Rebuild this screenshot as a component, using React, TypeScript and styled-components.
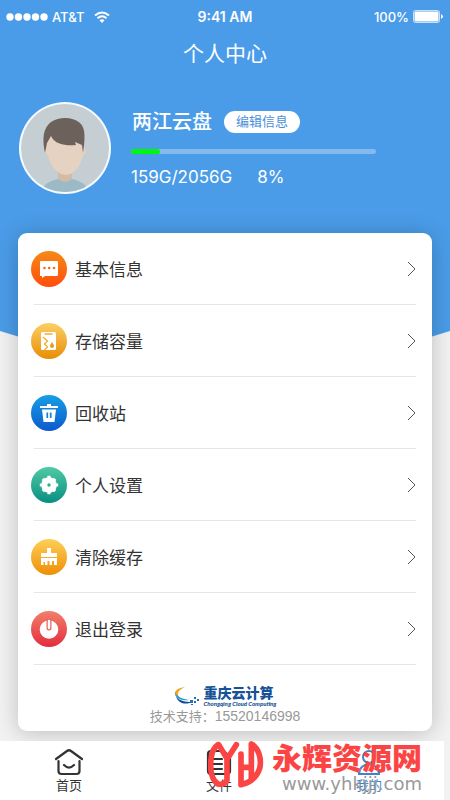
import React from 'react';
import styled, { createGlobalStyle } from 'styled-components';

const GlobalStyle = createGlobalStyle`
  *, *::before { box-sizing: border-box; }
  body {
    margin: 0;
    background: #f2f2f2;
    color: #333;
    font-family: "Liberation Sans", "Noto Sans CJK SC", sans-serif;
  }
  button { border: 0; padding: 0; background: none; font-family: inherit; color: inherit; cursor: pointer; }
`;

const Screen = styled.div`
  position: relative;
  isolation: isolate;
  display: flex;
  flex-direction: column;
  min-height: 100vh;
  overflow: hidden;

  &::before {
    content: '';
    position: absolute;
    z-index: -1;
    inset: 0 0 auto;
    height: 400px;
    background: #4a9ce8;
    clip-path: polygon(0 0, 100% 0, 100% 331px, 50% 400px, 0 331px);
  }
`;

const StatusBar = styled.div`
  display: grid;
  grid-template-columns: 1fr auto 1fr;
  align-items: center;
  height: 33px;
  padding: 0 6px;
  color: #fff;
  font: 500 13px Inter, sans-serif;
`;

const StatusGroup = styled.div<{ $end?: boolean }>`
  display: flex;
  align-items: center;
  gap: 4px;
  justify-content: ${p => (p.$end ? 'flex-end' : 'flex-start')};
`;

const Carrier = styled.span`margin-right: 6px;`;
const Clock = styled.span`
  font-size: 14px;
  font-weight: 600;
`;

const Title = styled.h1`
  margin: 0;
  color: #fff;
  font-size: 21px;
  font-weight: 400;
  line-height: 42px;
  text-align: center;
`;

const Profile = styled.section`
  display: flex;
  align-items: flex-start;
  gap: 20px;
  padding: 27px 74px 0 19px;
  color: #fff;
`;

const Avatar = styled.svg`
  flex: none;
  width: 92px;
  height: 92px;
`;

const ProfileInfo = styled.div`
  flex: 1;
  padding-top: 4px;
`;

const NameRow = styled.div`
  display: flex;
  align-items: center;
  gap: 12px;
  height: 31px;
`;

const Name = styled.h2`
  margin: 0;
  font-size: 20px;
  font-weight: 500;
  line-height: 30px;
  padding-left: 1px;
`;

const EditButton = styled.button`
  height: 22px;
  padding: 0 12px;
  border-radius: 11px;
  background: #fff;
  color: #4a90d9;
  font-size: 13px;
  line-height: 22px;
`;

const Track = styled.div`
  height: 5px;
  margin-top: 12px;
  border-radius: 3px;
  background: #84baee;
`;

const Fill = styled.div`
  height: 100%;
  border-radius: 3px;
  background: #00f513;
`;

const Usage = styled.div`
  display: flex;
  gap: 25px;
  margin-top: 12px;
  font: 17px/22px Inter, sans-serif;
`;

const Card = styled.main`
  margin: 39px 18px 0;
  padding: 0 16px 5px;
  border-radius: 9px;
  background: #fff;
  box-shadow: 0 2px 22px rgba(0, 0, 0, 0.22);
`;

const Menu = styled.ul`
  margin: 0;
  padding: 0;
  list-style: none;
`;

const MenuItem = styled.li`border-bottom: 1px solid #e5e5e5;`;

const MenuButton = styled.button`
  display: flex;
  align-items: center;
  width: 100%;
  height: 71px;
  font-size: 17px;
  text-align: left;
`;

const Badge = styled.span<{ $from: string; $to: string }>`
  display: grid;
  place-items: center;
  width: 36px;
  height: 36px;
  margin: 0 8px 0 -3px;
  border-radius: 50%;
  background: linear-gradient(${p => p.$from}, ${p => p.$to});
`;

const MenuLabel = styled.span`flex: 1;`;

const Support = styled.footer`
  display: flex;
  flex-direction: column;
  align-items: center;
  padding-top: 20px;
`;

const Brand = styled.div`
  display: flex;
  align-items: center;
  gap: 3px;
  height: 22px;
`;

const BrandText = styled.div`
  display: flex;
  flex-direction: column;
  color: #155298;
`;

const BrandName = styled.strong`
  font-size: 14px;
  font-weight: 900;
  line-height: 14px;
`;

const BrandLatin = styled.em`
  font: italic 900 6px/7px Lato, sans-serif;
`;

const Phone = styled.p`
  margin: 0;
  color: #999;
  font-size: 14px;
  line-height: 18px;
`;

const PhoneLabel = styled.span`font-size: 13px;`;

const NavArea = styled.div`
  position: relative;
  margin-top: auto;
`;

const TabBar = styled.nav`
  display: flex;
  justify-content: space-between;
  height: 59px;
  padding: 6px 50px 0 44px;
  margin-right: 6px;
  background: #fff;
`;

const Tab = styled.a<{ $active?: boolean }>`
  display: flex;
  flex-direction: column;
  align-items: center;
  width: 50px;
  color: ${p => (p.$active ? '#3f83cc' : '#333')};
  font-size: 13px;
  line-height: 18px;
  text-decoration: none;
`;

const SiteMark = styled.div`
  position: absolute;
  right: 28px;
  top: -1px;
  display: flex;
  gap: 8px;
  pointer-events: none;
`;

const SiteText = styled.div`
  display: flex;
  flex-direction: column;
  align-items: flex-end;
`;

const SiteName = styled.strong`
  color: #fb4545;
  font-size: 30px;
  font-weight: 900;
  line-height: 38px;
`;

const SiteUrl = styled.span`
  color: #999;
  font: 18px/12px "DejaVu Sans", sans-serif;
`;

const ICONS = {
  chat: (
    <>
      <path d="M2 2h16a1 1 0 0 1 1 1v13a1 1 0 0 1-1 1H6l-3 2v-2H1V3a1 1 0 0 1 1-1z" fill="#fff" />
      <g fill="#fb6b13"><circle cx="5.500" cy="9" r="1.300" /><circle cx="10.200" cy="9" r="1.300" /><circle cx="15" cy="9" r="1.300" /></g>
    </>
  ),
  storage: (
    <>
      <rect x="2" y="1" width="15" height="18" rx="1.500" fill="#fff" />
      <path d="M5.500 3h8M4 6l4.500 4L5.500 13l3 3-3 3" fill="none" stroke="#f2ac35" strokeWidth="1.300" />
      <path d="M13 11c-1 2-2 2.700-2 4a2 2 0 0 0 4 0c0-1.300-1-2-2-4z" fill="#ed9a18" />
    </>
  ),
  trash: (
    <>
      <path d="M1 3h18v2H1zM8 1h4v2H8zM3 6.500h14L15.500 19h-11z" fill="#fff" />
      <path d="M8.300 9.500V15M11.700 9.500V15" stroke="#1280db" strokeWidth="1.700" />
    </>
  ),
  gear: (
    <>
      <circle cx="10" cy="10" r="7.800" fill="#fff" />
      <path d="M10 .800v18.400M.800 10h18.400M3.800 3.800l12.400 12.400M16.200 3.800L3.800 16.200" stroke="#fff" strokeWidth="3.200" strokeLinejoin="round" />
      <circle cx="10" cy="10" r="1.700" fill="#2bae96" />
    </>
  ),
  brush: (
    <path d="M8 1h4v5h6v4H2V6h6zM2 11h16v7h-3v-4h-2v4h-2.500v-4h-2v4H6v-3H4.500v3H2z" fill="#fff" />
  ),
  power: (
    <>
      <circle cx="10" cy="10.500" r="9.300" fill="#fff" />
      <path d="M10 1v8" stroke="#ed6059" strokeWidth="5" strokeLinecap="round" />
      <path d="M10 2v7" stroke="#fff" strokeWidth="2.500" strokeLinecap="round" />
    </>
  ),
};

const ITEMS: { label: string; icon: keyof typeof ICONS; from: string; to: string }[] = [
  { label: '基本信息', icon: 'chat', from: '#f68a16', to: '#ff4d0c' },
  { label: '存储容量', icon: 'storage', from: '#fbd067', to: '#e88d04' },
  { label: '回收站', icon: 'trash', from: '#169fe5', to: '#0d59cd' },
  { label: '个人设置', icon: 'gear', from: '#50c9a4', to: '#088f82' },
  { label: '清除缓存', icon: 'brush', from: '#fdcf58', to: '#ef8e05' },
  { label: '退出登录', icon: 'power', from: '#f2806b', to: '#e32c3e' },
];

function UserAvatar() {
  return (
    <Avatar viewBox="0 0 92 92" role="img" aria-label="头像">
      <defs><clipPath id="face"><circle cx="46" cy="46" r="44" /></clipPath></defs>
      <circle cx="46" cy="46" r="46" fill="#f4faff" />
      <g clipPath="url(#face)">
        <rect width="92" height="92" fill="#c5ced3" />
        <path d="M22 92c1-9 8-13 17-15h14c9 2 16 6 17 15z" fill="#9bbac6" />
        <path d="M39 66h14v11q-7 6-14 0z" fill="#d3bba8" />
        <path d="M28 34h37v12c3 2 2 6-1 7-2 11-9 20-17 20S31 64 29 53c-4-1-4-5-3-7z" fill="#e6d2c1" />
        <path d="M26 51c-3-14-2-25 6-31 9-6 22-5 29 1 6 5 5 17 3 30l-1-8-7-3 1 3c-9 1-21 0-25-9l-4 7z" fill="#6d625b" />
      </g>
    </Avatar>
  );
}

export default function App() {
  return (
    <>
      <GlobalStyle />
      <Screen>
        <StatusBar>
          <StatusGroup>
            <svg width="42" height="8" viewBox="0 0 42 8" fill="#fff">
              {[4, 12.5, 21, 29.5, 38].map(x => <circle key={x} cx={x} cy="4" r="3.700" />)}
            </svg>
            <Carrier>AT&amp;T</Carrier>
            <svg width="16" height="12" viewBox="0 0 16 12" fill="none" stroke="#fff" strokeWidth="2">
              <path d="M1 4.500q7-6 14 0M3.500 7.300q4.500-4 9 0" />
              <path d="M5.500 9.300q2.500-2 5 0L8 12z" fill="#fff" stroke="none" />
            </svg>
          </StatusGroup>
          <Clock>9:41 AM</Clock>
          <StatusGroup $end>
            <span>100%</span>
            <svg width="31" height="13" viewBox="0 0 31 13" fill="#fff">
              <rect x=".5" y=".5" width="26" height="12" rx="2" fill="none" stroke="#fff" strokeOpacity=".7" />
              <rect x="1.500" y="1.500" width="24" height="10" rx="1" />
              <path d="M28 4q4 2.500 0 5z" />
            </svg>
          </StatusGroup>
        </StatusBar>
        <Title>个人中心</Title>
        <Profile>
          <UserAvatar />
          <ProfileInfo>
            <NameRow>
              <Name>两江云盘</Name>
              <EditButton type="button">编辑信息</EditButton>
            </NameRow>
            <Track role="progressbar" aria-label="已用容量" aria-valuenow={8} aria-valuemin={0} aria-valuemax={100}>
              <Fill style={{ width: '12%' }} />
            </Track>
            <Usage><span>159G/2056G</span><span>8%</span></Usage>
          </ProfileInfo>
        </Profile>
        <Card>
          <Menu>
            {ITEMS.map(item => (
              <MenuItem key={item.label}>
                <MenuButton type="button">
                  <Badge $from={item.from} $to={item.to}>
                    <svg width="20" height="20" viewBox="0 0 20 20">{ICONS[item.icon]}</svg>
                  </Badge>
                  <MenuLabel>{item.label}</MenuLabel>
                  <svg width="9" height="16" viewBox="0 0 9 16" fill="none" stroke="#555">
                    <path d="M1 1l7 7-7 7" />
                  </svg>
                </MenuButton>
              </MenuItem>
            ))}
          </Menu>
          <Support>
            <Brand>
              <svg width="27" height="20" viewBox="0 0 27 20">
                <path d="M11 1C4 2 0 5 1 8q1 3 5 4C2 8 4 4 11 1z" fill="#f4a321" />
                <path d="M1 7c0 6 7 8 14 7C9 13 4 11 1 7z" fill="#2c9bd8" />
                <path d="M2 11c3 7 10 8 16 5-7 0-12-1-16-5z" fill="#134c94" />
                <path d="M16 14h3v3h-3zM20 11h2v2h-2zM20 15h2v2h-2zM23 13h2v2h-2zM17 18h2v1h-2z" fill="#2371b8" />
              </svg>
              <BrandText>
                <BrandName>重庆云计算</BrandName>
                <BrandLatin>Chongqing Cloud Computing</BrandLatin>
              </BrandText>
            </Brand>
            <Phone><PhoneLabel>技术支持：</PhoneLabel>15520146998</Phone>
          </Support>
        </Card>
        <NavArea>
          <TabBar>
            <Tab href="#home">
              <svg width="30" height="30" viewBox="0 0 30 30" fill="none" stroke="#333" strokeWidth="2.200" strokeLinecap="round" strokeLinejoin="round">
                <path d="M2 12L13 4q2-1.500 4 0l11 8M4.500 14v10q0 3 3 3h15q3 0 3-3V14M10 18q5 5 10 0" />
              </svg>
              首页
            </Tab>
            <Tab href="#files">
              <svg width="30" height="30" viewBox="0 0 30 30" fill="none" stroke="#333" strokeWidth="2.200" strokeLinecap="round">
                <path d="M7 4h13l6 6v14q0 3-3 3H7q-3 0-3-3V7q0-3 3-3zM9 12h9M9 17h9M9 22h9" />
              </svg>
              文件
            </Tab>
            <Tab href="#mine" $active>
              <svg width="30" height="30" viewBox="0 0 30 30" fill="none" stroke="#3f83cc" strokeWidth="2">
                <circle cx="15" cy="10" r="6" /><path d="M5 27c0-13 20-13 20 0z" />
              </svg>
              我的
            </Tab>
          </TabBar>
          <SiteMark>
            <svg width="56" height="50" viewBox="44 30 168 150" fill="none" stroke="#fb4545" strokeWidth="17" strokeLinecap="round" strokeLinejoin="round">
              <path d="M74 44C46 62 43 142 74 162Q95 166 101 150V88L129 44M76 44L101 86" />
              <path d="M143 72V164Q186 155 199 115C206 85 195 54 174 42V150M143 112H174" />
            </svg>
            <SiteText>
              <SiteName>永辉资源网</SiteName>
              <SiteUrl>www.yhkjjj.com</SiteUrl>
            </SiteText>
          </SiteMark>
        </NavArea>
      </Screen>
    </>
  );
}
